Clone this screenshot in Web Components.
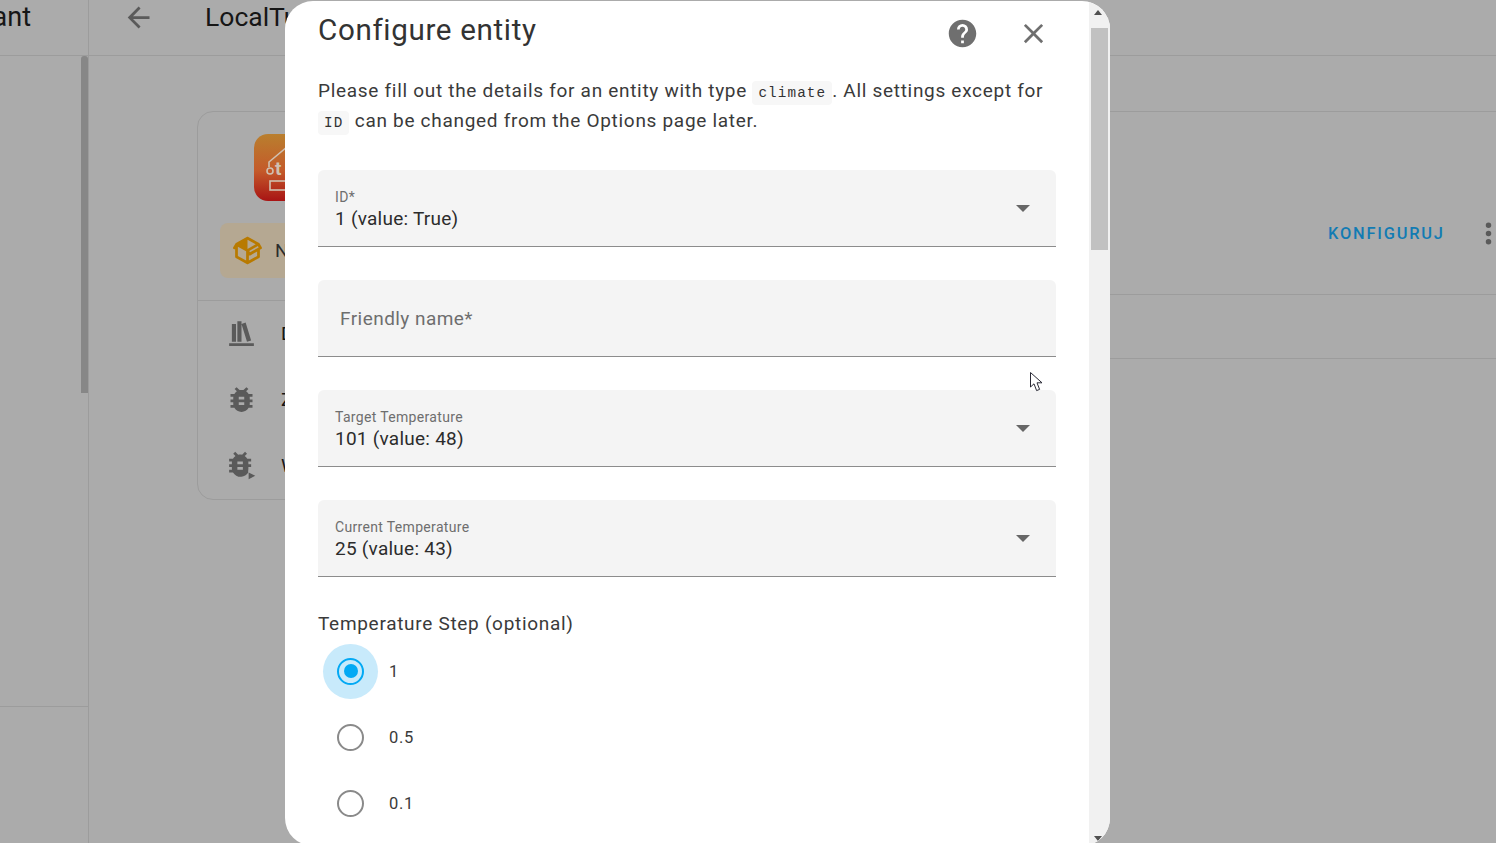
<!DOCTYPE html>
<html lang="en">
<head>
<meta charset="utf-8">
<title>Configure entity</title>
<style>
  html, body { margin: 0; height: 843px; overflow: hidden; background: #ababab; font-family: Roboto, "Liberation Sans", sans-serif; }
</style>
</head>
<body>
<integration-page></integration-page>
<config-dialog>
  <select-field label="ID*" value="1 (value: True)"></select-field>
  <text-field label="Friendly name*"></text-field>
  <select-field label="Target Temperature" value="101 (value: 48)"></select-field>
  <select-field label="Current Temperature" value="25 (value: 43)"></select-field>
  <radio-group label="Temperature Step (optional)">
    <radio-item label="1" checked></radio-item>
    <radio-item label="0.5"></radio-item>
    <radio-item label="0.1"></radio-item>
  </radio-group>
</config-dialog>
<mouse-cursor></mouse-cursor>

<script>
const ICONS = {
  back: 'M20,11V13H8L13.5,18.5L12.08,19.92L4.16,12L12.08,4.08L13.5,5.5L8,11H20Z',
  close: 'M19,6.41L17.59,5L12,10.59L6.41,5L5,6.41L10.59,12L5,17.59L6.41,19L12,13.41L17.59,19L19,17.59L13.41,12L19,6.41Z',
  help: 'M15.07,11.25L14.17,12.17C13.45,12.89 13,13.5 13,15H11V14.5C11,13.39 11.45,12.39 12.17,11.67L13.41,10.41C13.78,10.05 14,9.55 14,9C14,7.89 13.1,7 12,7A2,2 0 0,0 10,9H8A4,4 0 0,1 12,5A4,4 0 0,1 16,9C16,9.88 15.64,10.67 15.07,11.25M13,19H11V17H13M12,2A10,10 0 0,0 2,12A10,10 0 0,0 12,22A10,10 0 0,0 22,12C22,6.47 17.5,2 12,2Z',
  dots: 'M12,16A2,2 0 0,1 14,18A2,2 0 0,1 12,20A2,2 0 0,1 10,18A2,2 0 0,1 12,16M12,10A2,2 0 0,1 14,12A2,2 0 0,1 12,14A2,2 0 0,1 10,12A2,2 0 0,1 12,10M12,4A2,2 0 0,1 14,6A2,2 0 0,1 12,8A2,2 0 0,1 10,6A2,2 0 0,1 12,4Z',
  books: 'M9 3V18H12V3H9M12 5L16 18L19 17L15 4L12 5M5 5V18H8V5H5M3 19V21H21V19H3Z',
  bug: 'M14,12H10V10H14M14,16H10V14H14M20,8H17.19C16.74,7.22 16.12,6.55 15.37,6.04L17,4.41L15.59,3L13.42,5.17C12.96,5.06 12.5,5 12,5C11.5,5 11.04,5.06 10.59,5.17L8.41,3L7,4.41L8.62,6.04C7.88,6.55 7.26,7.22 6.81,8H4V10H6.09C6.04,10.33 6,10.66 6,11V12H4V14H6V15C6,15.34 6.04,15.67 6.09,16H4V18H6.81C7.85,19.79 9.78,21 12,21C14.22,21 16.15,19.79 17.19,18H20V16H17.91C17.96,15.67 18,15.34 18,15V14H20V12H18V11C18,10.66 17.96,10.33 17.91,10H20V8Z',
  bugPlay: 'M19 7H16.19C15.74 6.2 15.12 5.5 14.37 5L16 3.41L14.59 2L12.42 4.17C11.96 4.06 11.5 4 11 4S10.05 4.06 9.59 4.17L7.41 2L6 3.41L7.62 5C6.87 5.5 6.26 6.21 5.81 7H3V9H5.09C5.03 9.33 5 9.66 5 10V11H3V13H5V14C5 14.34 5.03 14.67 5.09 15H3V17H5.81C7.1 19.2 9.5 20.4 12 20.2C13.9 20 15.7 19 16.8 17.3C16.97 15 17 14.34 17 14V13H19V11H17V10C17 9.66 16.97 9.33 16.91 9H19V7M13 15H9V13H13V15M13 11H9V9H13V11M17.2 17V22L22 19.5L17.2 17Z',
  box: 'M2,10.96C1.5,10.68 1.35,10.07 1.63,9.59L3.13,7C3.24,6.8 3.41,6.66 3.6,6.58L11.43,2.18C11.59,2.06 11.79,2 12,2C12.21,2 12.41,2.06 12.57,2.18L20.47,6.62C20.66,6.72 20.82,6.88 20.91,7.08L22.36,9.6C22.64,10.08 22.47,10.69 22,10.96L21,11.54V16.5C21,16.88 20.79,17.21 20.47,17.38L12.57,21.82C12.41,21.94 12.21,22 12,22C11.79,22 11.59,21.94 11.43,21.82L3.53,17.38C3.21,17.21 3,16.88 3,16.5V10.96C2.7,11.13 2.32,11.14 2,10.96M12,4.15V4.15L12,10.85V10.85L17.96,7.5L12,4.15M5,15.91L11,19.29V12.58L5,9.21V15.91M19,15.91V12.69L14,15.59C13.67,15.77 13.3,15.76 13,15.6V19.29L19,15.91M13.85,13.36L20.13,9.73L19.55,8.72L13.27,12.35L13.85,13.36Z'
};

class MdiIcon extends HTMLElement {
  connectedCallback() {
    const size = this.getAttribute('size') || 33;
    const color = this.getAttribute('color') || '#5a5a5a';
    this.attachShadow({ mode: 'open' }).innerHTML = `
      <style>:host { display: inline-flex; flex: none; width: ${size}px; height: ${size}px; }</style>
      <svg viewBox="0 0 24 24" width="${size}" height="${size}"><path fill="${color}" d="${ICONS[this.getAttribute('name')]}"/></svg>`;
  }
}
customElements.define('mdi-icon', MdiIcon);

// --- greyed-out page behind the dialog ---
class IntegrationPage extends HTMLElement {
  connectedCallback() {
    const row = (icon, letter) => `<div class="row"><mdi-icon name="${icon}"></mdi-icon><span>${letter}</span></div>`;
    this.attachShadow({ mode: 'open' }).innerHTML = `
      <style>
        :host { display: grid; grid-template-columns: 89px 1fr; height: 843px; overflow: hidden; background: #ababab; color: #161616; }
        .side { border-right: 1px solid #9c9c9c; min-width: 0; }
        .head { height: 55px; border-bottom: 1px solid #9c9c9c; box-sizing: content-box; display: flex; align-items: flex-start; font-size: 27px; line-height: 34px; }
        .side .head { justify-content: flex-end; padding-right: 57px; overflow: hidden; white-space: nowrap; }
        .side-body { height: 650px; border-bottom: 1px solid #9c9c9c; }
        .thumb { width: 7px; height: 337px; margin-left: 81px; background: #878787; border-radius: 3px 3px 0 0; }
        .main { min-width: 0; overflow: hidden; }
        .main .head { padding-left: 33px; font-size: 26.5px; line-height: 33px; }
        .main .head mdi-icon { margin-top: 1px; }
        .main .head span { margin-left: 50px; }
        .cards { display: flex; gap: 20px; padding: 55px 0 0 108px; align-items: flex-start; }
        .card { border: 1px solid #9c9c9c; box-sizing: border-box; flex: none; }
        .left { width: 440px; height: 389px; border-radius: 16px; }
        .logo { display: block; margin: 22px 0 22px 56px; width: 67px; height: 67px; border-radius: 14px; }
        .chip { display: flex; align-items: center; gap: 11px; height: 55px; margin: 0 22px; padding-left: 11px; border-radius: 8px; background: #b5a892; color: #2c2c2c; font-size: 19px; }
        .links { margin-top: 22px; border-top: 1px solid #9c9c9c; }
        .row { display: flex; align-items: center; height: 66px; padding-left: 27px; font-size: 19px; }
        .row:first-child { margin-top: -1px; }
        .row span { margin-left: 23px; }
        .right { width: 860px; height: 248px; border-radius: 16px 0 0 16px; }
        .top { height: 183px; border-bottom: 1px solid #9c9c9c; display: flex; align-items: center; padding: 60px 0 0 670px; box-sizing: border-box; }
        .btn { color: #127bb3; font-size: 16.4px; font-weight: 500; letter-spacing: 1.8px; }
        .top mdi-icon { margin-left: 27px; }
      </style>
      <div class="side">
        <div class="head"><span>Home Assistant</span></div>
        <div class="side-body"><div class="thumb"></div></div>
      </div>
      <div class="main">
        <div class="head"><mdi-icon name="back"></mdi-icon><span>LocalTuya</span></div>
        <div class="cards">
          <div class="card left">
            <svg class="logo" viewBox="0 0 67 67">
              <defs><linearGradient id="lg" x1="0" y1="0" x2="0" y2="1">
                <stop offset="0" stop-color="#b97f2e"/><stop offset=".55" stop-color="#c45a2a"/><stop offset="1" stop-color="#a81414"/>
              </linearGradient></defs>
              <rect width="67" height="67" fill="url(#lg)"/>
              <path d="M15 33V28L33 13L50 25V34" fill="none" stroke="#d0c0b0" stroke-width="1.6"/>
              <circle cx="16" cy="37" r="3" fill="none" stroke="#d0c0b0" stroke-width="1.6"/>
              <text x="21" y="41" font-family="Roboto, sans-serif" font-weight="700" font-size="19" fill="#d0c0b0">t</text>
              <rect x="16" y="47" width="36" height="9" fill="none" stroke="#d0c0b0" stroke-width="1.6"/>
            </svg>
            <div class="chip"><mdi-icon name="box" color="#b87a00"></mdi-icon><span>N</span></div>
            <div class="links">
              ${row('books', 'D')}${row('bug', 'Z')}${row('bugPlay', 'W')}
            </div>
          </div>
          <div class="card right">
            <div class="top"><span class="btn">KONFIGURUJ</span><mdi-icon name="dots"></mdi-icon></div>
          </div>
        </div>
      </div>`;
  }
}
customElements.define('integration-page', IntegrationPage);

// --- dialog ---
class ConfigDialog extends HTMLElement {
  connectedCallback() {
    this.attachShadow({ mode: 'open' }).innerHTML = `
      <style>
        :host { position: absolute; left: 285px; top: 1px; width: 825px; height: 845px; display: flex; background: #fff; border-radius: 28px; overflow: hidden; color: #3a3a3a; }
        .body { flex: 1; min-width: 0; padding: 0 33px; box-sizing: border-box; }
        header { display: flex; align-items: center; height: 57px; }
        h2 { flex: 1; margin: 1px 0 0; font-size: 29.6px; font-weight: 400; letter-spacing: .65px; color: #333; line-height: 36px; }
        header mdi-icon { margin-top: 8px; }
        .help { margin-right: 38px; }
        .close { margin-right: 6px; }
        p { margin: 18px 0 34px; font-size: 19px; line-height: 30px; letter-spacing: .7px; width: 738px; }
        code { font-family: "Liberation Mono", monospace; font-size: 14.3px; line-height: 1; letter-spacing: 1.1px; background: #f7f7f7; padding: 4px 6px; border-radius: 4px; color: #333; }
        .fields { display: flex; flex-direction: column; gap: 33px; width: 738px; }
        .bar { flex: none; width: 21px; background: #f1f1f1; display: flex; flex-direction: column; align-items: center; }
        .up { width: 0; height: 0; margin: 9px 4px 0 0; border: 4px solid transparent; border-top: 0; border-bottom: 5px solid #505050; }
        .thumb { width: 17px; height: 222px; margin: 13px 0 auto; background: #c1c1c1; }
        .down { width: 0; height: 0; margin: 0 4px 5px 0; border: 4px solid transparent; border-bottom: 0; border-top: 5px solid #505050; }
      </style>
      <div class="body">
        <header>
          <h2>Configure entity</h2>
          <mdi-icon class="help" name="help" size="33" color="#6f6f6f"></mdi-icon>
          <mdi-icon class="close" name="close" size="33" color="#6f6f6f"></mdi-icon>
        </header>
        <p>Please fill out the details for an entity with type <code>climate</code>. All settings except for <code>ID</code> can be changed from the Options page later.</p>
        <div class="fields"><slot></slot></div>
      </div>
      <div class="bar"><div class="up"></div><div class="thumb"></div><div class="down"></div></div>`;
  }
}
customElements.define('config-dialog', ConfigDialog);

const fieldCss = `
  :host { display: block; height: 77px; box-sizing: border-box; background: #f4f4f4; border-radius: 6px 6px 0 0; border-bottom: 1px solid #8c8c8c; position: relative; font-family: Roboto, "Liberation Sans", sans-serif; }
`;

class SelectField extends HTMLElement {
  connectedCallback() {
    this.attachShadow({ mode: 'open' }).innerHTML = `
      <style>${fieldCss}
        .wrap { display: flex; align-items: center; height: 100%; padding: 0 26px 0 17px; }
        .text { flex: 1; padding-top: 3px; }
        .label { font-size: 14px; line-height: 18px; color: #6e6e6e; letter-spacing: .33px; }
        .value { font-size: 19px; line-height: 26px; color: #2c2c2c; letter-spacing: .25px; }
        .arrow { width: 0; height: 0; border: 7px solid transparent; border-bottom: 0; border-top: 7px solid #666; }
      </style>
      <div class="wrap">
        <div class="text">
          <div class="label">${this.getAttribute('label')}</div>
          <div class="value">${this.getAttribute('value')}</div>
        </div>
        <div class="arrow"></div>
      </div>`;
  }
}
customElements.define('select-field', SelectField);

class TextField extends HTMLElement {
  connectedCallback() {
    this.attachShadow({ mode: 'open' }).innerHTML = `
      <style>${fieldCss}
        .wrap { display: flex; align-items: center; height: 100%; padding-left: 22px; font-size: 19px; color: #6e6e6e; letter-spacing: .45px; }
      </style>
      <div class="wrap">${this.getAttribute('label')}</div>`;
  }
}
customElements.define('text-field', TextField);

class RadioGroup extends HTMLElement {
  connectedCallback() {
    this.attachShadow({ mode: 'open' }).innerHTML = `
      <style>
        :host { display: block; margin-top: -1px; }
        .title { font-size: 19px; line-height: 30px; letter-spacing: .7px; color: #3a3a3a; margin-bottom: -1px; }
      </style>
      <div class="title">${this.getAttribute('label')}</div>
      <slot></slot>`;
  }
}
customElements.define('radio-group', RadioGroup);

class RadioItem extends HTMLElement {
  connectedCallback() {
    const on = this.hasAttribute('checked');
    this.attachShadow({ mode: 'open' }).innerHTML = `
      <style>
        :host { display: flex; align-items: center; height: 66px; padding-left: 5px; font-size: 16.5px; letter-spacing: .75px; color: #3a3a3a; }
        .halo { width: 55px; height: 55px; border-radius: 50%; display: flex; align-items: center; justify-content: center; background: ${on ? '#c8eafb' : 'transparent'}; }
        .ring { width: 27px; height: 27px; box-sizing: border-box; border-radius: 50%; border: 2.5px solid ${on ? '#03a9f4' : '#8a8a8a'}; display: flex; align-items: center; justify-content: center; }
        .dot { width: 14px; height: 14px; border-radius: 50%; background: #03a9f4; }
        span { margin-left: 11px; }
      </style>
      <div class="halo"><div class="ring">${on ? '<div class="dot"></div>' : ''}</div></div>
      <span>${this.getAttribute('label')}</span>`;
  }
}
customElements.define('radio-item', RadioItem);

class MouseCursor extends HTMLElement {
  connectedCallback() {
    this.attachShadow({ mode: 'open' }).innerHTML = `
      <style>:host { position: absolute; left: 1030px; top: 372px; width: 14px; height: 20px; }</style>
      <svg width="14" height="20" viewBox="0 0 14 20"><path d="M.5.5V15L4 11.8L6.6 18.6L9.6 17.4L7 10.8H12Z" fill="#fff" stroke="#2a2a35" stroke-width="1"/></svg>`;
  }
}
customElements.define('mouse-cursor', MouseCursor);
</script>
</body>
</html>
